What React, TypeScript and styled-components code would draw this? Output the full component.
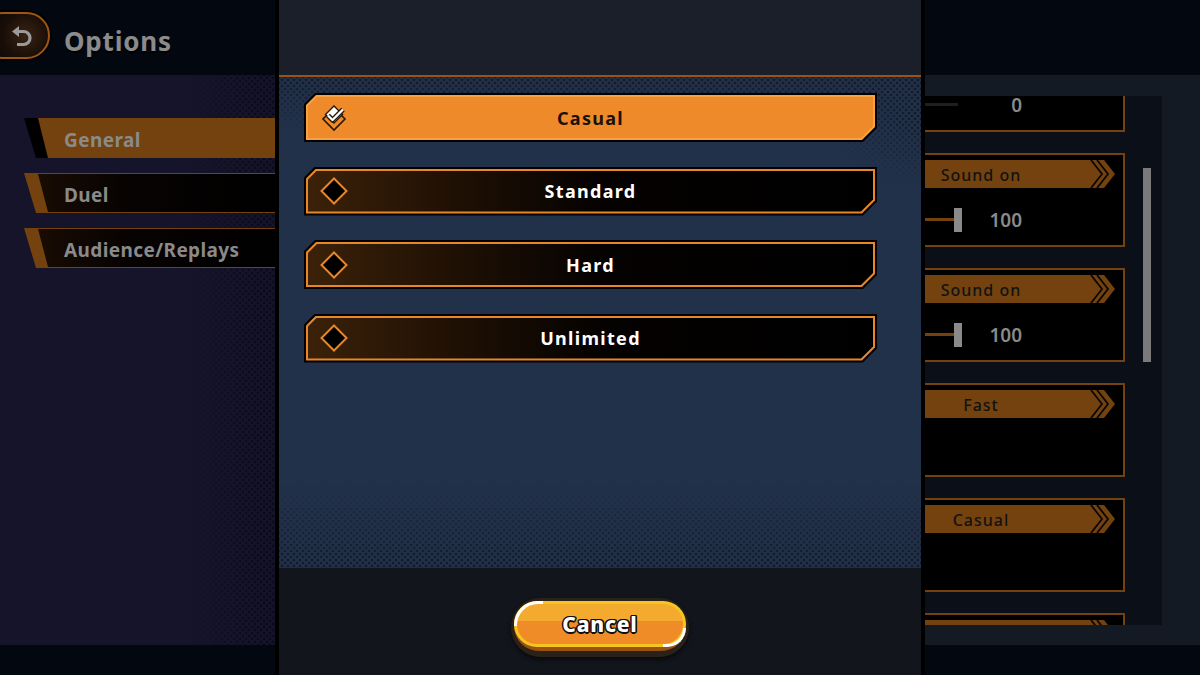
import React from 'react';
import styled, { createGlobalStyle, css } from 'styled-components';

const GlobalStyle = createGlobalStyle`
  html, body {
    margin: 0;
    padding: 0;
    background: #03070f;
  }
  body {
    font-family: 'Noto Sans', 'Open Sans', sans-serif;
  }
  * {
    box-sizing: border-box;
  }
`;

// dotted halftone layer, faded with a mask
const halftone = (dot: string, mask: string) => css`
  content: '';
  position: absolute;
  inset: 0;
  pointer-events: none;
  background-image: radial-gradient(circle, ${dot} 1.2px, transparent 1.7px),
    radial-gradient(circle, ${dot} 1.2px, transparent 1.7px);
  background-size: 6px 6px;
  background-position: 0 0, 3px 3px;
  -webkit-mask-image: ${mask};
  mask-image: ${mask};
`;

const Page = styled.div`
  position: relative;
  width: 1200px;
  height: 675px;
  overflow: hidden;
  display: grid;
  grid-template-rows: 75px 1fr 30px;
  background: #03070f;
`;

const TopBar = styled.header`
  display: flex;
  align-items: center;
  gap: 14px;
  background: #03070f;
`;

const BackButton = styled.div`
  width: 70px;
  height: 47px;
  margin-left: -20px;
  margin-top: -4px;
  border: 2px solid #9e5612;
  border-radius: 24px;
  background: radial-gradient(circle at 66% 50%, #3a2312 0%, #1a0f08 45%, #07070a 85%);
  box-shadow: 0 0 0 2px #000;
  display: flex;
  align-items: center;
  justify-content: flex-end;
  padding-right: 15px;
`;

const Title = styled.h1`
  margin: 0;
  margin-top: 6px;
  font-size: 26px;
  font-weight: 700;
  letter-spacing: 0.8px;
  color: #8b8b8b;
  text-shadow: 0 2px 0 #000;
`;

const Body = styled.main`
  display: flex;
  min-height: 0;
`;

const NavPanel = styled.nav`
  position: relative;
  width: 280px;
  background: #16142b;
  padding: 43px 0 0 24px;
  display: flex;
  flex-direction: column;
  gap: 15px;

  &::before {
    ${halftone('rgba(6, 6, 18, 0.75)', 'linear-gradient(to right, transparent 190px, black 265px)')}
  }
`;

const Tab = styled.div<{ $active?: boolean }>`
  position: relative;
  height: 40px;
  clip-path: polygon(0 0, 100% 0, 100% 100%, 12px 100%);
  background: ${(p) => (p.$active ? '#000' : '#74420f')};
  display: flex;
`;

const TabFace = styled.div<{ $active?: boolean }>`
  flex: 1;
  margin: ${(p) => (p.$active ? '0' : '1px 0')};
  clip-path: polygon(14px 0, 100% 0, 100% 100%, 24px 100%);
  background: ${(p) =>
    p.$active ? '#74420f' : 'linear-gradient(90deg, #1b0d02 0%, #070302 40%, #000 100%)'};
  display: flex;
  align-items: center;
  padding: 3px 0 0 40px;
  font-size: 19px;
  font-weight: 700;
  letter-spacing: 0.4px;
  color: #8a8a8a;
`;

const MainArea = styled.section`
  flex: 1;
  background: #141a24;
  display: flex;
  justify-content: flex-end;
  padding: 21px 38px 20px 0;
`;

const SettingsPanel = styled.div`
  width: 562px;
  background: #0b0f17;
  overflow: hidden;
  display: flex;
`;

const CardColumn = styled.div`
  flex: 1;
  display: flex;
  flex-direction: column;
  gap: 21px;
  margin-top: -58px;
`;

const Card = styled.div`
  flex: none;
  height: 94px;
  border: 2px solid #74420f;
  background: #000;
  padding-top: 5px;
`;

const CardBar = styled.div`
  height: 28px;
  margin-right: 8px;
  display: flex;
  justify-content: flex-end;
`;

const BarBody = styled.div`
  flex: 1;
  background: #74420f;
  display: flex;
  justify-content: flex-end;
  align-items: center;
`;

const BarLabel = styled.span`
  width: 214px;
  padding-top: 2px;
  text-align: center;
  font-size: 16px;
  font-weight: 500;
  letter-spacing: 1px;
  color: #121212;
`;

const SliderRow = styled.div`
  display: flex;
  align-items: center;
  height: 24px;
  margin-top: 20px;
  padding-right: 101px;
`;

const Track = styled.div<{ $value: number }>`
  position: relative;
  flex: 1;
  height: 24px;

  &::before {
    content: '';
    position: absolute;
    left: 0;
    right: 4px;
    top: 10px;
    height: 3px;
    background: ${(p) => (p.$value > 0 ? '#74420f' : '#1f1f1f')};
  }

  &::after {
    content: '';
    position: absolute;
    top: 0;
    width: 8px;
    height: 24px;
    background: #8a8a8a;
    left: ${(p) => (p.$value > 0 ? 'calc(100% - 8px)' : '0')};
  }
`;

const SliderValue = styled.span`
  width: 60px;
  text-align: right;
  font-size: 19px;
  font-weight: 600;
  color: #8a8a8a;
`;

const ScrollTrack = styled.div`
  width: 8px;
  margin: 0 11px 0 18px;
`;

const ScrollThumb = styled.div`
  margin-top: 72px;
  height: 194px;
  background: #7a7a7a;
`;

const Footer = styled.footer`
  background: #03070f;
`;

/* modal */

const Modal = styled.div`
  position: absolute;
  top: 0;
  left: 275px;
  width: 650px;
  height: 100%;
  border-left: 4px solid #000;
  border-right: 4px solid #000;
  display: flex;
  flex-direction: column;
`;

const ModalTop = styled.div`
  height: 77px;
  flex: none;
  background: #1a1f2a;
  border-bottom: 2px solid #9c5212;
`;

const ModalBody = styled.div`
  position: relative;
  height: 491px;
  flex: none;
  background: #22314a;
  padding: 16px 0 0 25px;

  &::before {
    ${halftone(
      'rgba(16, 22, 34, 0.85)',
      'linear-gradient(to bottom, black 0, transparent 55px), radial-gradient(ellipse 90px 70px at 100% 40px, black, transparent)'
    )}
  }
  &::after {
    ${halftone('rgba(16, 22, 34, 0.85)', 'linear-gradient(to top, black 0, transparent 85px)')}
  }
`;

const OptionList = styled.div`
  position: relative;
  z-index: 1;
  width: 573px;
  display: flex;
  flex-direction: column;
  gap: 24.5px;
`;

const chamfer = (tl: number, br: number) =>
  `polygon(${tl}px 0, 100% 0, 100% calc(100% - ${br}px), calc(100% - ${br}px) 100%, 0 100%, 0 ${tl}px)`;

const OptionShell = styled.div`
  height: 49px;
  padding: 2px;
  background: #000;
  clip-path: ${chamfer(11, 14)};
  display: flex;
`;

const OptionRing = styled.div<{ $selected?: boolean }>`
  flex: 1;
  padding: 2px;
  background: ${(p) => (p.$selected ? '#f6a243' : '#e8862a')};
  clip-path: ${chamfer(10, 13)};
  display: flex;
`;

const OptionFace = styled.div<{ $selected?: boolean }>`
  flex: 1;
  clip-path: ${chamfer(9, 12)};
  background: ${(p) =>
    p.$selected
      ? '#ee8a2a'
      : 'linear-gradient(90deg, #3b2108 0%, #1d0f04 28%, #050201 52%, #000 100%)'};
  display: grid;
  grid-template-columns: 1fr auto 1fr;
  align-items: center;
`;

const OptionIcon = styled.div`
  justify-self: start;
  margin-left: 12px;
  display: flex;
`;

const OptionLabel = styled.span<{ $selected?: boolean }>`
  font-size: 18px;
  font-weight: 700;
  letter-spacing: 1.3px;
  color: ${(p) => (p.$selected ? '#1b1006' : '#fff')};
`;

const ModalBottom = styled.div`
  flex: 1;
  background: #12151c;
  display: flex;
  justify-content: center;
  padding-top: 30px;
`;

const CancelOuter = styled.div`
  width: 178px;
  height: 59px;
  border-radius: 30px;
  background: #2a2219;
  padding: 3px 3px 6px;
  box-shadow: 0 3px 4px rgba(0, 0, 0, 0.5);
`;

const CancelBase = styled.div`
  height: 100%;
  border-radius: 26px;
  background: #9a5210;
  padding-bottom: 4px;
`;

const CancelFace = styled.div`
  position: relative;
  height: 100%;
  border-radius: 24px;
  border: 3px solid #f6c61e;
  background: linear-gradient(180deg, #f3aa2e 0%, #f3aa2e 42%, #f08c28 42%, #f08c28 100%);
  display: flex;
  align-items: center;
  justify-content: center;
  font-size: 21px;
  font-weight: 800;
  letter-spacing: 0.8px;
  color: #fff;
  text-shadow: 1.5px 0 0 #111, -1.5px 0 0 #111, 0 1.5px 0 #111, 0 -1.5px 0 #111,
    1.2px 1.2px 0 #111, -1.2px 1.2px 0 #111, 1.2px -1.2px 0 #111, -1.2px -1.2px 0 #111;

  &::before {
    content: '';
    position: absolute;
    top: -3px;
    left: -3px;
    width: 26px;
    height: 22px;
    border-top: 3px solid #fff;
    border-left: 3px solid #fff;
    border-radius: 24px 0 0 0;
  }
  &::after {
    content: '';
    position: absolute;
    bottom: -3px;
    right: -3px;
    width: 20px;
    height: 16px;
    border-bottom: 3px solid #fff;
    border-right: 3px solid #fff;
    border-radius: 0 0 24px 0;
  }
`;

const BackIcon = () => (
  <svg width="22" height="22" viewBox="0 0 22 22">
    <polygon points="1,6.5 8,1 8,12" fill="#9b9b9b" />
    <path d="M7 6.5 H12.5 A6.5 6.5 0 0 1 12.5 19.5 H6" stroke="#9b9b9b" strokeWidth="3.2" fill="none" />
  </svg>
);

const Diamond = () => (
  <svg width="28" height="28" viewBox="0 0 28 28">
    <polygon points="14,1.5 26.5,14 14,26.5 1.5,14" fill="#000" stroke="#e8862a" strokeWidth="2" />
  </svg>
);

const CheckedDiamond = () => (
  <svg width="28" height="28" viewBox="0 0 28 28">
    <polygon points="14,4 25,15 14,26 3,15" fill="none" stroke="#2a1606" strokeWidth="1.6" />
    <polygon points="14,2 22.5,10.5 14,19 5.5,10.5" fill="#fff" stroke="#2a1606" strokeWidth="1.4" />
    <path d="M8 11.5 L12.5 16 L23 5.5" fill="none" stroke="#2a1606" strokeWidth="5" strokeLinejoin="round" />
    <path d="M8 11.5 L12.5 16 L23 5.5" fill="none" stroke="#fff" strokeWidth="2.4" strokeLinejoin="round" />
  </svg>
);

const Chevrons = () => (
  <svg width="27" height="28" viewBox="0 0 27 28">
    <polygon points="0,0 16,0 27,14 16,28 0,28" fill="#74420f" />
    <polyline points="3,0 14,14 3,28" fill="none" stroke="#0b0704" strokeWidth="1.8" />
    <polyline points="9,0 20,14 9,28" fill="none" stroke="#0b0704" strokeWidth="1.8" />
  </svg>
);

const tabs = [
  { label: 'General', active: true },
  { label: 'Duel' },
  { label: 'Audience/Replays' },
];

// first and last cards are scrolled partly out of view, their labels never show
const cards: { label: string; value?: number }[] = [
  { label: '', value: 0 },
  { label: 'Sound on', value: 100 },
  { label: 'Sound on', value: 100 },
  { label: 'Fast' },
  { label: 'Casual' },
  { label: '' },
];

const options = ['Casual', 'Standard', 'Hard', 'Unlimited'];

const App = () => {
  const selected = 'Casual';

  return (
    <>
      <GlobalStyle />
      <Page>
        <TopBar>
          <BackButton>
            <BackIcon />
          </BackButton>
          <Title>Options</Title>
        </TopBar>
        <Body>
          <NavPanel>
            {tabs.map((t) => (
              <Tab key={t.label} $active={t.active}>
                <TabFace $active={t.active}>{t.label}</TabFace>
              </Tab>
            ))}
          </NavPanel>
          <MainArea>
            <SettingsPanel>
              <CardColumn>
                {cards.map((c, i) => (
                  <Card key={i}>
                    <CardBar>
                      <BarBody>
                        <BarLabel>{c.label}</BarLabel>
                      </BarBody>
                      <Chevrons />
                    </CardBar>
                    {c.value !== undefined && (
                      <SliderRow>
                        <Track $value={c.value} />
                        <SliderValue>{c.value}</SliderValue>
                      </SliderRow>
                    )}
                  </Card>
                ))}
              </CardColumn>
              <ScrollTrack>
                <ScrollThumb />
              </ScrollTrack>
            </SettingsPanel>
          </MainArea>
        </Body>
        <Footer />

        <Modal>
          <ModalTop />
          <ModalBody>
            <OptionList>
              {options.map((o) => {
                const isSel = o === selected;
                return (
                  <OptionShell key={o}>
                    <OptionRing $selected={isSel}>
                      <OptionFace $selected={isSel}>
                        <OptionIcon>{isSel ? <CheckedDiamond /> : <Diamond />}</OptionIcon>
                        <OptionLabel $selected={isSel}>{o}</OptionLabel>
                      </OptionFace>
                    </OptionRing>
                  </OptionShell>
                );
              })}
            </OptionList>
          </ModalBody>
          <ModalBottom>
            <CancelOuter>
              <CancelBase>
                <CancelFace>Cancel</CancelFace>
              </CancelBase>
            </CancelOuter>
          </ModalBottom>
        </Modal>
      </Page>
    </>
  );
};

export default App;
